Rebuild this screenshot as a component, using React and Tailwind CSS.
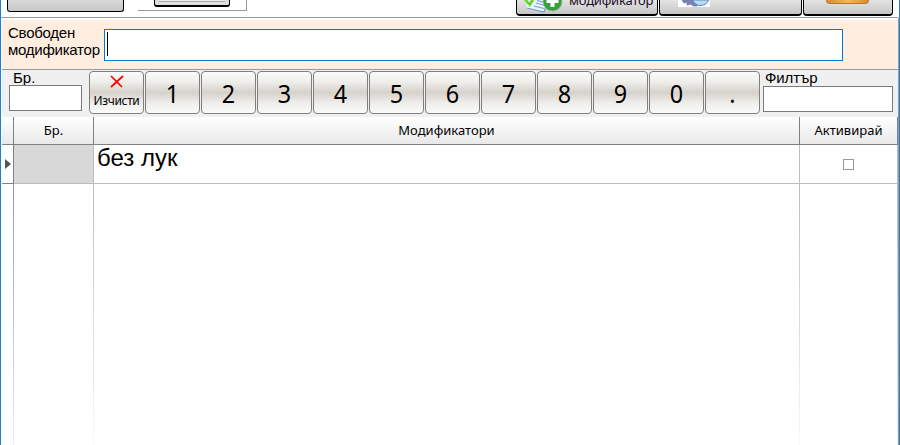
import React from "react";

const KEYS = ["1", "2", "3", "4", "5", "6", "7", "8", "9", "0", "."];

const keyLook =
  "flex h-[43px] w-[55px] shrink-0 rounded-[4px] border border-[#7f7f7f] bg-[linear-gradient(#fbfbfa_0%,#eeedea_25%,#d6d2cb_50%,#eeedea_75%,#fbfbfa_100%)]";

function ModifierIcon() {
  return (
    <svg width="42" height="13" viewBox="0 0 42 13" className="block shrink-0">
      <path d="M3 0H23L21 12L4 8Z" fill="#edf6fd" />
      <path d="M4 8L21 12L23 6M11 6L21 8.5M13 3L22 5.5M14 0.5L22 2.5" stroke="#6f9fcc" strokeWidth="1.1" fill="none" />
      <path d="M1 0L7 6.5L11 0H8L6.500 3L4 0Z" fill="#55cb25" stroke="#8fe05c" />
      <circle cx="29.500" cy="1.500" r="9.500" fill="#36a23a" stroke="#a3aea3" />
      <path d="M27.500 0H31.500V7H27.500ZM23.500 0H35.500V3H23.500Z" fill="#fff" />
    </svg>
  );
}

function SearchIcon() {
  return (
    <svg width="32" height="7" viewBox="0 0 32 7" className="block bg-white">
      <path d="M4 0L6 3L9 2L9 5L13 4L15 6L19 6L20 0Z" fill="#8083b9" stroke="#656a9d" strokeWidth="0.7" />
      <path d="M14.500 0Q17 5.500 23 5.500Q29 5 30.500 0Z" fill="#b1dcff" stroke="#6585ae" />
    </svg>
  );
}

function TopBar() {
  const button = "h-[16px] rounded-b-[4px] border border-t-0 border-b-2 border-black bg-linear-to-b from-[#e4e4e4] to-[#c6c6c6]";
  return (
    <div className="flex h-[17px] shrink-0 items-start pl-[6px]">
      <div className="h-[12px] w-[117px] rounded-b-[3px] border border-t-0 border-black bg-linear-to-b from-[#d9d9d9] to-[#c6c6c6]" />
      <div className="ml-[14px] flex h-[11px] w-[109px] items-start justify-center border-r border-b border-[#999]">
        <div className="h-[7px] w-[76px] rounded-b-[3px] border border-t-0 border-b-2 border-black bg-[#dedede] px-[4px]">
          <div className="h-[2px] border-b border-[#aaa] bg-[#ededed]" />
        </div>
      </div>
      <div className={`${button} ml-[269px] flex w-[142px]`}>
        <div className="ml-[6px]"><ModifierIcon /></div>
        <span className="mt-[-9px] ml-[4px] font-['Noto_Sans',sans-serif] text-[13px] leading-[18px] tracking-[-0.2px] text-[#160b25]">модификатор</span>
      </div>
      <div className={`${button} ml-px w-[143px] pl-[18px]`}><SearchIcon /></div>
      <div className={`${button} ml-px w-[90px] pl-[22px]`}>
        <div className="h-[4px] w-[43px] rounded-b-[4px] border-x border-b border-[#b87932] bg-linear-to-r from-[#d88d35] via-[#f5b45b] to-[#d88d35]" />
      </div>
    </div>
  );
}

function Header({ children, className }) {
  return <div className={`flex items-center justify-center border-b border-[#808080] bg-linear-to-b from-white to-[#e9e9e9] ${className}`}>{children}</div>;
}

export default function App() {
  return (
    <div className="flex h-[445px] w-[900px] overflow-hidden border-l border-[#1683d8] bg-white font-['Liberation_Sans',sans-serif] text-black">
      <div className="flex w-[897px] shrink-0 flex-col">
        <TopBar />
        <div className="mb-[2px] h-px shrink-0 bg-[#999]" />
        <section className="ml-px flex h-[50px] shrink-0 border-b border-[#999] bg-[#ffeee0]">
          <label className="mt-[4px] ml-[6px] w-[96px] text-[15px] leading-[17px] tracking-[-0.25px]">Свободен модификатор</label>
          <div className="mt-[9px] flex h-[32px] w-[739px] border border-[#0078d7] bg-white">
            <div className="mt-[2px] ml-[2px] h-[24px] w-px bg-black" />
          </div>
        </section>
        <section className="ml-px flex h-[47px] shrink-0 bg-[#f0f0f0]">
          <label className="ml-[7px] flex w-[73px] flex-col text-[15px] leading-[15px]">
            <span className="pl-[4px]">Бр.</span>
            <span className="h-[26px] border border-[#7a7a7a] bg-white" />
          </label>
          <div className="mt-px ml-[7px] flex gap-px">
            <button className={`${keyLook} flex-col items-center`}>
              <svg width="14" height="13" viewBox="0 0 14 13" className="mt-[3px] shrink-0">
                <path d="M1 1L12 12M13 1L1 12" stroke="#ff0000" strokeWidth="1.7" />
              </svg>
              <span className="mt-[5px] font-['Noto_Sans',sans-serif] text-[12px] leading-[16px] tracking-[-0.35px]">Изчисти</span>
            </button>
            {KEYS.map((key) => (
              <button key={key} className={`${keyLook} items-center justify-center pt-[2px] font-['Noto_Sans',sans-serif] text-[26px]`}>
                <span className="scale-x-90">{key}</span>
              </button>
            ))}
          </div>
          <label className="ml-[3px] flex w-[130px] flex-col text-[15px] leading-[16px]">
            <span className="pl-[2px] tracking-[-0.1px]">Филтър</span>
            <span className="h-[26px] border border-[#7a7a7a] bg-white" />
          </label>
        </section>
        <main className="ml-px flex min-h-0 flex-1 flex-col">
          <div className="flex h-[28px] shrink-0 font-['Noto_Sans',sans-serif] text-[13px]">
            <Header className="w-[12px] border-r" />
            <Header className="w-[80px] border-r">Бр.</Header>
            <Header className="w-[706px] border-r">Модификатори</Header>
            <Header className="w-[98px] border-r">Активирай</Header>
          </div>
          <div className="flex h-[39px] shrink-0">
            <div className="flex w-[12px] items-center border-r border-b border-[#808080] pl-[3px]">
              <svg width="6" height="10" viewBox="0 0 6 10"><path d="M0 0L6 5L0 10Z" fill="#555" /></svg>
            </div>
            <div className="w-[80px] border-r border-b border-[#bdbdbd] bg-[#d8d8d8]" />
            <div className="w-[706px] border-r border-b border-[#bdbdbd] pl-[3px] text-[24px] leading-[26px]">без лук</div>
            <div className="flex w-[98px] items-center justify-center border-r border-b border-[#bdbdbd]">
              <div className="size-[11px] border border-[#999] bg-white" />
            </div>
          </div>
          <div className="flex min-h-0 flex-1">
            <div className="ml-[11px] w-px bg-linear-to-b from-[#999] to-[#eee]" />
            <div className="ml-[79px] w-px bg-linear-to-b from-[#bdbdbd] to-[#fafafa]" />
            <div className="ml-[705px] w-px bg-linear-to-b from-[#bdbdbd] to-[#fafafa]" />
            <div className="ml-[97px] w-px bg-linear-to-b from-[#bdbdbd] to-[#eee]" />
          </div>
        </main>
      </div>
      <div className="mt-[18px] w-px shrink-0 bg-[#999]" />
      <div className="w-px shrink-0 bg-[#1683d8]" />
    </div>
  );
}
